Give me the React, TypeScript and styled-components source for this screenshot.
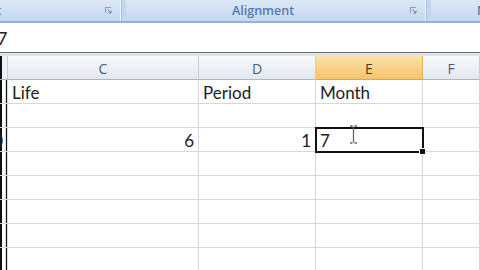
import React from "react";
import styled, { createGlobalStyle } from "styled-components";

const Global = createGlobalStyle`
  html, body { margin: 0; padding: 0; background: #fff; }
  body { width: 480px; height: 270px; overflow: hidden; }
`;

const Screen = styled.div`
  width: 480px;
  height: 270px;
  overflow: hidden;
  display: flex;
  flex-direction: column;
  background: #fff;
  font-family: Lato, "Open Sans", sans-serif;
`;

const Ribbon = styled.div`
  height: 21px;
  display: flex;
  flex-shrink: 0;
  background: #c5d7ee;
  border-bottom: 2px solid #98b1d4;
`;

const Group = styled.div<{ $w: number }>`
  width: ${(p) => p.$w}px;
  flex-shrink: 0;
  display: flex;
  align-items: center;
  background: linear-gradient(#dce8f6, #c4d8f0);
  border-right: 1px solid #a9c1e0;
  box-shadow: inset -1px 0 0 #eef4fb;
  margin-right: 4px;
`;

const GroupLabel = styled.div<{ $pad: number }>`
  flex: 1;
  padding-left: ${(p) => p.$pad}px;
  font-family: "Open Sans", "DejaVu Sans", sans-serif;
  font-size: 12.5px;
  font-weight: 600;
  color: #5578b0;
  white-space: nowrap;
  overflow: hidden;
`;

const Launcher = styled.div`
  width: 9px;
  height: 9px;
  margin-right: 8px;
  display: flex;
`;

const FormulaBar = styled.div`
  height: 29px;
  flex-shrink: 0;
  display: flex;
  align-items: center;
  border-bottom: 1px solid #6e6e6e;
  font-size: 18px;
  color: #222;
`;

const FormulaText = styled.span`
  margin-left: -3px;
  padding-top: 1px;
`;

const Gap = styled.div`
  height: 3px;
  flex-shrink: 0;
  background: #dfe5ee;
`;

const Sheet = styled.div`
  flex: 1;
  position: relative;
  display: grid;
  grid-template-columns: 8px 191px 117px 107px 57px;
  grid-auto-rows: 24px;
`;

const ColHead = styled.div<{ $sel?: boolean }>`
  display: flex;
  align-items: center;
  justify-content: center;
  padding-top: 2px;
  font-family: "Open Sans", Lato, sans-serif;
  font-size: 14px;
  color: ${(p) => (p.$sel ? "#4a3a1a" : "#4d5b6e")};
  background: ${(p) =>
    p.$sel
      ? "linear-gradient(#fbe1a8, #f4c46a)"
      : "linear-gradient(#f8f9fb, #e2e8ef)"};
  border-right: 1px solid ${(p) => (p.$sel ? "#e3b45c" : "#c6cfdb")};
  border-bottom: 1px solid ${(p) => (p.$sel ? "#e0a93e" : "#aab6c6")};
  box-sizing: border-box;
`;

const EdgeHead = styled(ColHead)`
  background: linear-gradient(to right, #111 2px, #eef1f5 2px);
`;

const Cell = styled.div<{ $right?: boolean }>`
  display: flex;
  align-items: center;
  justify-content: ${(p) => (p.$right ? "flex-end" : "flex-start")};
  padding: 2px 4px 0;
  font-size: 17px;
  color: #222;
  border-right: 1px solid #d4d8de;
  border-bottom: 1px solid #d4d8de;
  box-sizing: border-box;
  white-space: nowrap;
`;

const EdgeCell = styled(Cell)`
  padding: 2px 2px 0 0;
  background: linear-gradient(to right, #111 2px, #fff 2px);
  border-right: 3px double #dadee4;
`;

const Selection = styled.div`
  position: absolute;
  left: 315px;
  top: 71px;
  width: 109px;
  height: 26px;
  border: 2px solid #111;
  box-sizing: border-box;
  pointer-events: none;
`;

const Handle = styled.div`
  position: absolute;
  right: -4px;
  bottom: -4px;
  width: 5px;
  height: 5px;
  background: #111;
  border: 1px solid #fff;
`;

const Cursor = styled.svg`
  position: absolute;
  left: 349px;
  top: 69px;
`;

const LauncherIcon = () => (
  <svg width="9" height="9" viewBox="0 0 9 9">
    <path d="M1 1h6v1H2v5H1z" fill="#8a9fbe" />
    <path d="M3.5 3.5l3.5 3.5M7 4.5V7H4.5" stroke="#6d7f99" strokeWidth="1" fill="none" />
  </svg>
);

const cols = ["C", "D", "E", "F"];

const rows: { b?: string; c?: string; cRight?: boolean; d?: string; dRight?: boolean; e?: string }[] = [
  { c: "Life", d: "Period", e: "Month" },
  {},
  { b: "0", c: "6", cRight: true, d: "1", dRight: true, e: "7" },
  {},
  {},
  {},
  {},
  {},
];

export default function App() {
  return (
    <Screen>
      <Global />
      <Ribbon>
        <Group $w={121}>
          <GroupLabel $pad={0} style={{ marginLeft: -26 }}>Font</GroupLabel>
          <Launcher>
            <LauncherIcon />
          </Launcher>
        </Group>
        <Group $w={300}>
          <GroupLabel $pad={106}>Alignment</GroupLabel>
          <Launcher>
            <LauncherIcon />
          </Launcher>
        </Group>
        <Group $w={60}>
          <GroupLabel $pad={46}>Number</GroupLabel>
        </Group>
      </Ribbon>
      <FormulaBar>
        <FormulaText>7</FormulaText>
      </FormulaBar>
      <Gap />
      <Sheet>
        <EdgeHead />
        {cols.map((c) => (
          <ColHead key={c} $sel={c === "E"}>
            {c}
          </ColHead>
        ))}
        {rows.map((r, i) => (
          <React.Fragment key={i}>
            <EdgeCell $right>{r.b ?? ""}</EdgeCell>
            <Cell $right={r.cRight}>{r.c ?? ""}</Cell>
            <Cell $right={r.dRight}>{r.d ?? ""}</Cell>
            <Cell>{r.e ?? ""}</Cell>
            <Cell />
          </React.Fragment>
        ))}
        <Selection>
          <Handle />
        </Selection>
        <Cursor width="9" height="19" viewBox="0 0 9 19">
          <path d="M1 1h2.5M5.5 1H8M4.5 1.5v16M1 18h2.5M5.5 18H8" stroke="#666" strokeWidth="1.3" fill="none" />
        </Cursor>
      </Sheet>
    </Screen>
  );
}
